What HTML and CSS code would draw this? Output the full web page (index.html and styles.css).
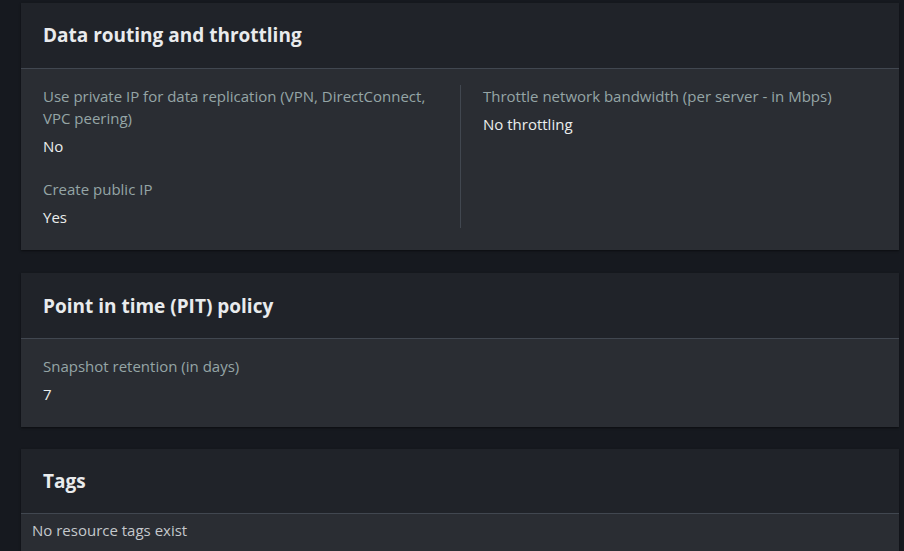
FILE: index.html
```html
<!DOCTYPE html>
<html lang="en">
<head>
<meta charset="utf-8">
<title>Details</title>
<link rel="stylesheet" href="styles.css">
</head>
<body>
<div class="page">
  <section class="card card-routing">
    <header class="card-header"><h2>Data routing and throttling</h2></header>
    <div class="card-body cols">
      <div class="col col-left">
        <div class="field">
          <div class="label">Use private IP for data replication (VPN, DirectConnect, VPC peering)</div>
          <div class="value">No</div>
        </div>
        <div class="field">
          <div class="label">Create public IP</div>
          <div class="value">Yes</div>
        </div>
      </div>
      <div class="col col-right">
        <div class="field">
          <div class="label">Throttle network bandwidth (per server - in Mbps)</div>
          <div class="value">No throttling</div>
        </div>
      </div>
    </div>
  </section>

  <section class="card card-pit">
    <header class="card-header"><h2>Point in time (PIT) policy</h2></header>
    <div class="card-body single">
      <div class="field">
        <div class="label">Snapshot retention (in days)</div>
        <div class="value">7</div>
      </div>
    </div>
  </section>

  <section class="card card-tags">
    <header class="card-header"><h2>Tags</h2></header>
    <div class="card-body tags-body">
      <div class="empty">No resource tags exist</div>
    </div>
  </section>
</div>
</body>
</html>
```
FILE: styles.css
```css
html, body {
  margin: 0;
  padding: 0;
  background: #16191f;
  height: 100%;
  overflow: hidden;
}
body {
  font-family: "Open Sans", "Noto Sans", Arial, sans-serif;
  font-size: 15px;
  color: #d1d5db;
}
.page {
  padding: 3px 5px 0 21px;
  display: flex;
  flex-direction: column;
  gap: 23px;
}
.card {
  background: #2a2d33;
  box-shadow: 0 1px 2px rgba(0,0,0,0.5);
}
.card-tags {
  margin-top: -1px;
}
.card-header {
  background: #202329;
  border-bottom: 1px solid #414750;
  height: 65px;
  display: flex;
  align-items: center;
  padding: 0 22px;
}
.card-tags .card-header {
  height: 64px;
}
.card-header h2 {
  margin: 0;
  font-size: 19px;
  line-height: 24px;
  font-weight: 700;
  color: #e9ebed;
}
.card-routing .card-header h2 {
  position: relative;
  top: -1px;
}
.cols {
  display: grid;
  grid-template-columns: 1fr 1fr;
  padding: 16px 0 22px;
}
.col {
  padding: 0 22px;
  display: flex;
  flex-direction: column;
  gap: 21px;
}
.col-right {
  border-left: 1px solid #414750;
}
.field {
  display: flex;
  flex-direction: column;
  gap: 6px;
}
.label {
  color: #95a5a6;
  line-height: 22px;
}
.value {
  color: #eaeded;
  line-height: 22px;
}
.single {
  padding: 16px 22px 22px;
}
.tags-body {
  padding: 5px 11px 12px;
}
.empty {
  color: #c4c8cc;
  line-height: 22px;
}
```
